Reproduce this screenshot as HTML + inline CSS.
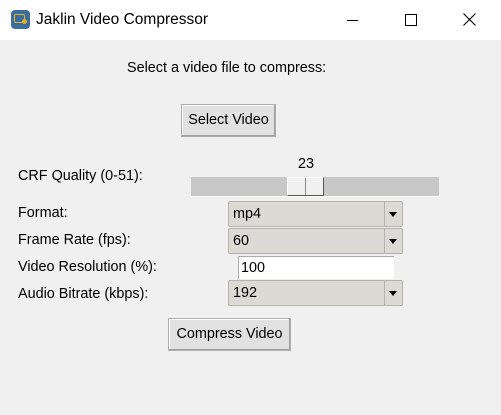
<html><head><style>
body{margin:0;width:501px;height:415px;background:#f0f0f0;font-family:"Liberation Sans",sans-serif;font-size:14.4px;color:#000;position:relative;overflow:hidden}
.a{position:absolute}
.t{position:absolute;white-space:nowrap}
.btn{position:absolute;background:#e1e1e1;border:1px solid #adadad;box-shadow:inset -1px -1px #a0a0a0,inset 1px 1px #fff;text-align:center;box-sizing:border-box}
.cb{position:absolute;left:228px;width:175px;height:26px;background:#dcdad5;border:1px solid #b5b3ae;box-sizing:border-box;border-radius:2px}
.cb span{position:absolute;left:4px;top:4px}
.cb i{position:absolute;right:0;top:0;width:17px;height:24px;border-left:1px solid #b5b3ae}
.cb i:after{content:"";position:absolute;left:4px;top:10px;border:4.5px solid transparent;border-top:5px solid #000;border-bottom:0}
</style></head><body>
<div class="a" style="left:0;top:0;width:501px;height:40px;background:#fff"></div>
<div class="a" style="left:11px;top:10px;width:19px;height:19px;background:#3a6d9a;border-radius:4px"></div>
<div class="a" style="left:14px;top:14px;width:11px;height:9px;border:1.5px solid #e0b030;border-radius:2px;box-sizing:border-box"></div>
<div class="a" style="left:22px;top:19px;width:5px;height:5px;background:#e0b030;border-radius:50%"></div>
<div class="t" style="left:36px;top:11px;font-size:15.5px">Jaklin Video Compressor</div>
<div class="a" style="left:347px;top:20px;width:11px;height:1px;background:#000"></div>
<div class="a" style="left:405px;top:14px;width:10px;height:10px;border:1px solid #000"></div>
<svg class="a" style="left:463px;top:13px" width="13" height="13"><path d="M0.5 0.5L12.5 12.5M12.5 0.5L0.5 12.5" stroke="#000" stroke-width="1.1"/></svg>
<div class="t" style="left:127px;top:60px">Select a video file to compress:</div>
<div class="btn" style="left:181px;top:104px;width:95px;height:33px;line-height:31px">Select Video</div>
<div class="t" style="left:18px;top:168px">CRF Quality (0-51):</div>
<div class="t" style="left:298px;top:156px">23</div>
<div class="a" style="left:191px;top:177px;width:248px;height:19px;background:#c8c8c8;border-bottom:1px solid #fff"></div>
<div class="a" style="left:287px;top:177px;width:37px;height:19px;background:#f0f0f0;border:1px solid #fff;border-right-color:#555;border-bottom-color:#555;box-sizing:border-box"></div>
<div class="a" style="left:305px;top:178px;width:1px;height:17px;background:#888"></div>
<div class="t" style="left:18px;top:205px">Format:</div>
<div class="t" style="left:18px;top:232px">Frame Rate (fps):</div>
<div class="t" style="left:18px;top:259px">Video Resolution (%):</div>
<div class="t" style="left:18px;top:286px">Audio Bitrate (kbps):</div>
<div class="cb" style="top:201px"><span>mp4</span><i></i></div>
<div class="cb" style="top:228px"><span>60</span><i></i></div>
<div class="a" style="left:238px;top:256px;width:156px;height:23px;background:#fff;border-top:1px solid #aaa;border-left:1px solid #aaa;box-sizing:border-box"><span class="t" style="left:2px;top:3px">100</span></div>
<div class="cb" style="top:280px"><span>192</span><i></i></div>
<div class="btn" style="left:168px;top:318px;width:123px;height:33px;line-height:31px">Compress Video</div>
</body></html>
